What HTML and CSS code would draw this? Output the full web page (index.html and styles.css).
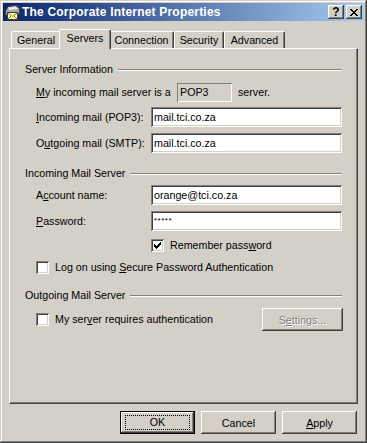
FILE: index.html
```html
<!DOCTYPE html>
<html lang="en">
<head>
    <meta charset="UTF-8">
    <title>The Corporate Internet Properties</title>
    <link rel="stylesheet" href="styles.css">
</head>
<body>
    <div class="window">
        <div class="titlebar">
            <svg class="app-icon" width="17" height="16" viewBox="0 0 17 16">
                <path d="M1.5 7.5 L4 2.5 L12 1.5 L15.5 4.5 L15.5 9.5 L12 11 L1.5 11 Z" fill="#a8a8a8" stroke="#404040" stroke-width="1"/>
                <path d="M4.5 3.5 L11.5 2.5 L14 5 L5 6 Z" fill="#e8e8e8"/>
                <rect x="3.5" y="8.5" width="10" height="7" fill="#ffff99" stroke="#404040"/>
                <path d="M4 9 L8.5 12.5 L13 9" fill="none" stroke="#808040"/>
                <path d="M4 15 L7 12 M13 15 L10 12" fill="none" stroke="#808040"/>
            </svg>
            <span class="title">The Corporate Internet Properties</span>
            <div class="caption-buttons">
                <div class="caption-btn help">?</div>
                <div class="caption-btn">
                    <svg width="8" height="7" viewBox="0 0 8 7">
                        <path d="M0 0h2v1h-2zM6 0h2v1h-2zM1 1h2v1h-2zM5 1h2v1h-2zM2 2h4v1h-4zM3 3h2v1h-2zM2 4h4v1h-4zM1 5h2v1h-2zM5 5h2v1h-2zM0 6h2v1h-2zM6 6h2v1h-2z" fill="#000"/>
                    </svg>
                </div>
            </div>
        </div>

        <div class="content">
            <div class="tabs">
                <div class="tab tab-general">General</div>
                <div class="tab tab-servers active">Servers</div>
                <div class="tab tab-connection">Connection</div>
                <div class="tab tab-security">Security</div>
                <div class="tab tab-advanced">Advanced</div>
            </div>

            <div class="panel">
                <div class="group-header">
                    <span>Server Information</span>
                    <div class="etched"></div>
                </div>

                <div class="field first">
                    <span class="label-wide"><u>M</u>y incoming mail server is a</span>
                    <div class="readonly">POP3</div>
                    <span class="after">server.</span>
                </div>
                <div class="field gap5">
                    <span class="label"><u>I</u>ncoming mail (POP3):</span>
                    <div class="edit">mail.tci.co.za</div>
                </div>
                <div class="field gap6">
                    <span class="label">O<u>u</u>tgoing mail (SMTP):</span>
                    <div class="edit">mail.tci.co.za</div>
                </div>

                <div class="group-header second">
                    <span>Incoming Mail Server</span>
                    <div class="etched"></div>
                </div>

                <div class="field gap5">
                    <span class="label">A<u>c</u>count name:</span>
                    <div class="edit">orange@tci.co.za</div>
                </div>
                <div class="field gap6">
                    <span class="label"><u>P</u>assword:</span>
                    <div class="edit password">*****</div>
                </div>

                <div class="check-row remember">
                    <div class="checkbox">
                        <svg width="7" height="7" viewBox="0 0 7 7">
                            <path d="M0 2h1v3h-1zM1 3h1v3h-1zM2 4h1v3h-1zM3 3h1v3h-1zM4 2h1v3h-1zM5 1h1v3h-1zM6 0h1v3h-1z" fill="#000"/>
                        </svg>
                    </div>
                    <span>Remember pass<u>w</u>ord</span>
                </div>
                <div class="check-row logon">
                    <div class="checkbox"></div>
                    <span>Log on using <u>S</u>ecure Password Authentication</span>
                </div>

                <div class="group-header third">
                    <span>Outgoing Mail Server</span>
                    <div class="etched"></div>
                </div>

                <div class="auth-row">
                    <div class="check-row">
                        <div class="checkbox"></div>
                        <span>My ser<u>v</u>er requires authentication</span>
                    </div>
                    <div class="button disabled">S<u>e</u>ttings...</div>
                </div>
            </div>

            <div class="buttons">
                <div class="button default"><span class="focus">OK</span></div>
                <div class="button">Cancel</div>
                <div class="button"><u>A</u>pply</div>
            </div>
        </div>
    </div>
</body>
</html>
```

FILE: styles.css
```css
body {
    margin: 0;
    font-family: "Liberation Sans", Arial, sans-serif;
    font-size: 10.7px;
    color: #000;
}
.window {
    width: 367px;
    height: 443px;
    box-sizing: border-box;
    padding: 3px;
    background-color: #d4d0c8;
    box-shadow: inset -1px -1px #404040, inset 1px 1px #d4d0c8,
                inset -2px -2px #808080, inset 2px 2px #ffffff;
    display: flex;
    flex-direction: column;
}
.titlebar {
    height: 18px;
    display: flex;
    align-items: center;
    padding-left: 1px;
    background: linear-gradient(to right, #0a246a, #a6caf0);
    color: #fff;
    font-weight: bold;
    font-size: 12px;
}
.app-icon {
    flex: none;
}
.title {
    margin-left: 1px;
    flex: 1;
    line-height: 14px;
    letter-spacing: 0.2px;
}
.caption-buttons {
    display: flex;
    gap: 2px;
    margin-right: 2px;
}
.caption-btn {
    width: 16px;
    height: 14px;
    box-sizing: border-box;
    background-color: #d4d0c8;
    box-shadow: inset -1px -1px #404040, inset 1px 1px #ffffff,
                inset -2px -2px #808080;
    display: flex;
    align-items: center;
    justify-content: center;
    color: #000;
}
.caption-btn.help {
    font-size: 12px;
    font-weight: bold;
    line-height: 14px;
}
.content {
    flex: 1;
    display: flex;
    flex-direction: column;
    padding: 8px 6px 0 6px;
}
.tabs {
    height: 19px;
    display: flex;
    align-items: flex-end;
    padding-left: 2px;
}
.tab {
    height: 17px;
    box-sizing: border-box;
    border-top: 1px solid #fff;
    border-left: 1px solid #fff;
    border-right: 1px solid #404040;
    border-radius: 2px 2px 0 0;
    box-shadow: inset -1px 0 #808080;
    text-align: center;
    line-height: 15px;
    padding-top: 1px;
}
.tab-general { width: 50px; }
.tab-servers { width: 52px; }
.tab-connection { width: 65px; }
.tab-security { width: 50px; }
.tab-advanced { width: 61px; }
.tab.active {
    height: 20px;
    margin: 0 -2px -1px -2px;
    position: relative;
    z-index: 1;
    background-color: #d4d0c8;
    line-height: 14px;
}
.panel {
    height: 356px;
    box-sizing: border-box;
    border: 1px solid;
    border-color: #fff #404040 #404040 #fff;
    box-shadow: inset -1px -1px #808080;
    padding: 14px 15px 0 15px;
}
.group-header {
    display: flex;
    align-items: center;
    line-height: 13px;
    height: 13px;
}
.group-header.second { margin-top: 14px; }
.group-header.third { margin-top: 15px; }
.etched {
    flex: 1;
    margin-left: 5px;
    border-top: 1px solid #808080;
    border-bottom: 1px solid #fff;
}
.field {
    display: flex;
    align-items: center;
    height: 20px;
    margin-left: 11px;
}
.field.first { margin-top: 6px; }
.field.gap5 { margin-top: 5px; }
.field.gap6 { margin-top: 6px; }
.label {
    width: 115px;
}
.label-wide {
    width: 141px;
}
.edit, .readonly {
    height: 20px;
    box-sizing: border-box;
    padding: 0 3px;
    line-height: 20px;
    box-shadow: inset 1px 1px #808080, inset -1px -1px #ffffff,
                inset 2px 2px #404040, inset -2px -2px #d4d0c8;
}
.edit {
    width: 191px;
    background-color: #fff;
}
.readonly {
    width: 55px;
    height: 19px;
    line-height: 19px;
    background-color: #d4d0c8;
    box-shadow: inset 1px 1px #808080, inset -1px -1px #ffffff;
}
.after {
    margin-left: 6px;
}
.password {
    font-size: 8px;
    letter-spacing: 0.5px;
}
.check-row {
    display: flex;
    align-items: center;
    gap: 6px;
    height: 13px;
    line-height: 13px;
}
.check-row.remember {
    margin: 8px 0 0 126px;
}
.check-row.logon {
    margin: 9px 0 0 11px;
}
.checkbox {
    width: 13px;
    height: 13px;
    box-sizing: border-box;
    background-color: #fff;
    box-shadow: inset 1px 1px #808080, inset -1px -1px #ffffff,
                inset 2px 2px #404040, inset -2px -2px #d4d0c8;
    display: flex;
    align-items: center;
    justify-content: center;
}
.auth-row {
    display: flex;
    align-items: center;
    justify-content: space-between;
    margin: 6px 0 0 11px;
}
.button {
    width: 75px;
    height: 23px;
    box-sizing: border-box;
    background-color: #d4d0c8;
    box-shadow: inset -1px -1px #404040, inset 1px 1px #ffffff,
                inset -2px -2px #808080;
    display: flex;
    align-items: center;
    justify-content: center;
}
.button.disabled {
    width: 81px;
    margin-right: -1px;
    color: #808080;
    text-shadow: 1px 1px #fff;
}
.buttons {
    display: flex;
    justify-content: flex-end;
    gap: 6px;
    margin-top: 7px;
    padding-right: 1px;
}
.button.default {
    border: 1px solid #000;
}
.focus {
    width: 65px;
    height: 15px;
    box-sizing: border-box;
    line-height: 13px;
    text-align: center;
    border: 1px dotted #000;
}
```
